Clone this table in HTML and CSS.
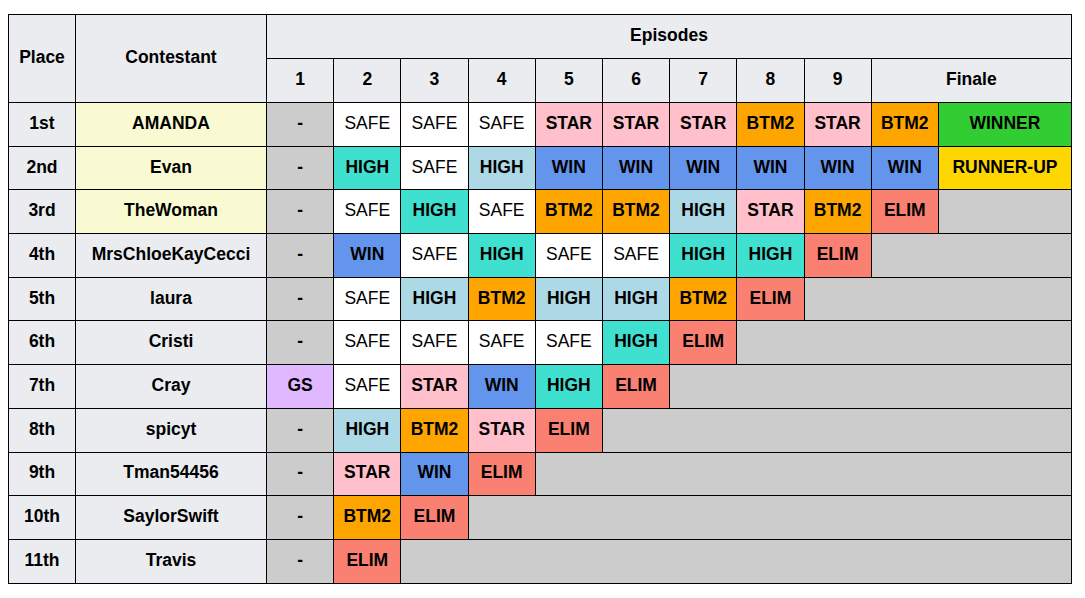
FILE: index.html
```html
<!DOCTYPE html>
<html>
<head>
<meta charset="utf-8">
<link rel="stylesheet" href="styles.css">
</head>
<body>
<table class="results">
  <colgroup>
    <col class="c-place">
    <col class="c-name">
    <col class="c-ep"><col class="c-ep"><col class="c-ep"><col class="c-ep"><col class="c-ep">
    <col class="c-ep"><col class="c-ep"><col class="c-ep"><col class="c-ep"><col class="c-ep">
    <col class="c-fin">
  </colgroup>
  <thead>
    <tr class="hrow">
      <th rowspan="2">Place</th>
      <th rowspan="2">Contestant</th>
      <th colspan="11">Episodes</th>
    </tr>
    <tr class="hrow">
      <th>1</th><th>2</th><th>3</th><th>4</th><th>5</th><th>6</th><th>7</th><th>8</th><th>9</th>
      <th colspan="2">Finale</th>
    </tr>
  </thead>
  <tbody>
    <tr>
      <th>1st</th><th class="top">AMANDA</th>
      <td class="na">-</td><td class="safe">SAFE</td><td class="safe">SAFE</td><td class="safe">SAFE</td>
      <td class="star">STAR</td><td class="star">STAR</td><td class="star">STAR</td><td class="btm">BTM2</td>
      <td class="star">STAR</td><td class="btm">BTM2</td><td class="winner">WINNER</td>
    </tr>
    <tr>
      <th>2nd</th><th class="top">Evan</th>
      <td class="na">-</td><td class="high">HIGH</td><td class="safe">SAFE</td><td class="high2">HIGH</td>
      <td class="win">WIN</td><td class="win">WIN</td><td class="win">WIN</td><td class="win">WIN</td>
      <td class="win">WIN</td><td class="win">WIN</td><td class="runner">RUNNER-UP</td>
    </tr>
    <tr>
      <th>3rd</th><th class="top">TheWoman</th>
      <td class="na">-</td><td class="safe">SAFE</td><td class="high">HIGH</td><td class="safe">SAFE</td>
      <td class="btm">BTM2</td><td class="btm">BTM2</td><td class="high2">HIGH</td><td class="star">STAR</td>
      <td class="btm">BTM2</td><td class="elim">ELIM</td><td class="out"></td>
    </tr>
    <tr>
      <th>4th</th><th>MrsChloeKayCecci</th>
      <td class="na">-</td><td class="win">WIN</td><td class="safe">SAFE</td><td class="high">HIGH</td>
      <td class="safe">SAFE</td><td class="safe">SAFE</td><td class="high">HIGH</td><td class="high">HIGH</td>
      <td class="elim">ELIM</td><td class="out" colspan="2"></td>
    </tr>
    <tr>
      <th>5th</th><th>laura</th>
      <td class="na">-</td><td class="safe">SAFE</td><td class="high2">HIGH</td><td class="btm">BTM2</td>
      <td class="high2">HIGH</td><td class="high2">HIGH</td><td class="btm">BTM2</td><td class="elim">ELIM</td>
      <td class="out" colspan="3"></td>
    </tr>
    <tr>
      <th>6th</th><th>Cristi</th>
      <td class="na">-</td><td class="safe">SAFE</td><td class="safe">SAFE</td><td class="safe">SAFE</td>
      <td class="safe">SAFE</td><td class="high">HIGH</td><td class="elim">ELIM</td>
      <td class="out" colspan="4"></td>
    </tr>
    <tr>
      <th>7th</th><th>Cray</th>
      <td class="gs">GS</td><td class="safe">SAFE</td><td class="star">STAR</td><td class="win">WIN</td>
      <td class="high">HIGH</td><td class="elim">ELIM</td>
      <td class="out" colspan="5"></td>
    </tr>
    <tr>
      <th>8th</th><th>spicyt</th>
      <td class="na">-</td><td class="high2">HIGH</td><td class="btm">BTM2</td><td class="star">STAR</td>
      <td class="elim">ELIM</td>
      <td class="out" colspan="6"></td>
    </tr>
    <tr>
      <th>9th</th><th>Tman54456</th>
      <td class="na">-</td><td class="star">STAR</td><td class="win">WIN</td><td class="elim">ELIM</td>
      <td class="out" colspan="7"></td>
    </tr>
    <tr>
      <th>10th</th><th>SaylorSwift</th>
      <td class="na">-</td><td class="btm">BTM2</td><td class="elim">ELIM</td>
      <td class="out" colspan="8"></td>
    </tr>
    <tr>
      <th>11th</th><th>Travis</th>
      <td class="na">-</td><td class="elim">ELIM</td>
      <td class="out" colspan="9"></td>
    </tr>
  </tbody>
</table>
</body>
</html>
```

FILE: styles.css
```css
html, body {
  background: #ffffff;
}
body {
  margin: 14px 8px;
  font-family: "Liberation Sans", Arial, sans-serif;
  font-size: 17.5px;
  color: #000000;
}
.results {
  border-collapse: collapse;
  table-layout: fixed;
  width: 1064px;
}
.c-place { width: 67px; }
.c-name { width: 191px; }
.c-ep { width: 67.2px; }
.c-fin { width: 133px; }

.results th,
.results td {
  border: 1px solid #000000;
  text-align: center;
  vertical-align: middle;
  padding: 0 0 2px 0;
  white-space: nowrap;
}
.results th {
  background: #eaecf0;
  font-weight: bold;
}
.hrow {
  height: 44px;
}
.results tbody tr {
  height: 43.7px;
}
.results td {
  font-weight: bold;
}
.results th.top { background: #fafad2; }
.na { background: #cccccc; }
.out { background: #cccccc; }
.results td.safe { background: #ffffff; font-weight: normal; }
.high { background: #40e0d0; }
.high2 { background: #add8e6; }
.win { background: #6495ed; }
.star { background: #ffc0cb; }
.btm { background: #ffa500; }
.elim { background: #fa8072; }
.winner { background: #32cd32; }
.runner { background: #ffd700; }
.gs { background: #e0b8ff; }
```
